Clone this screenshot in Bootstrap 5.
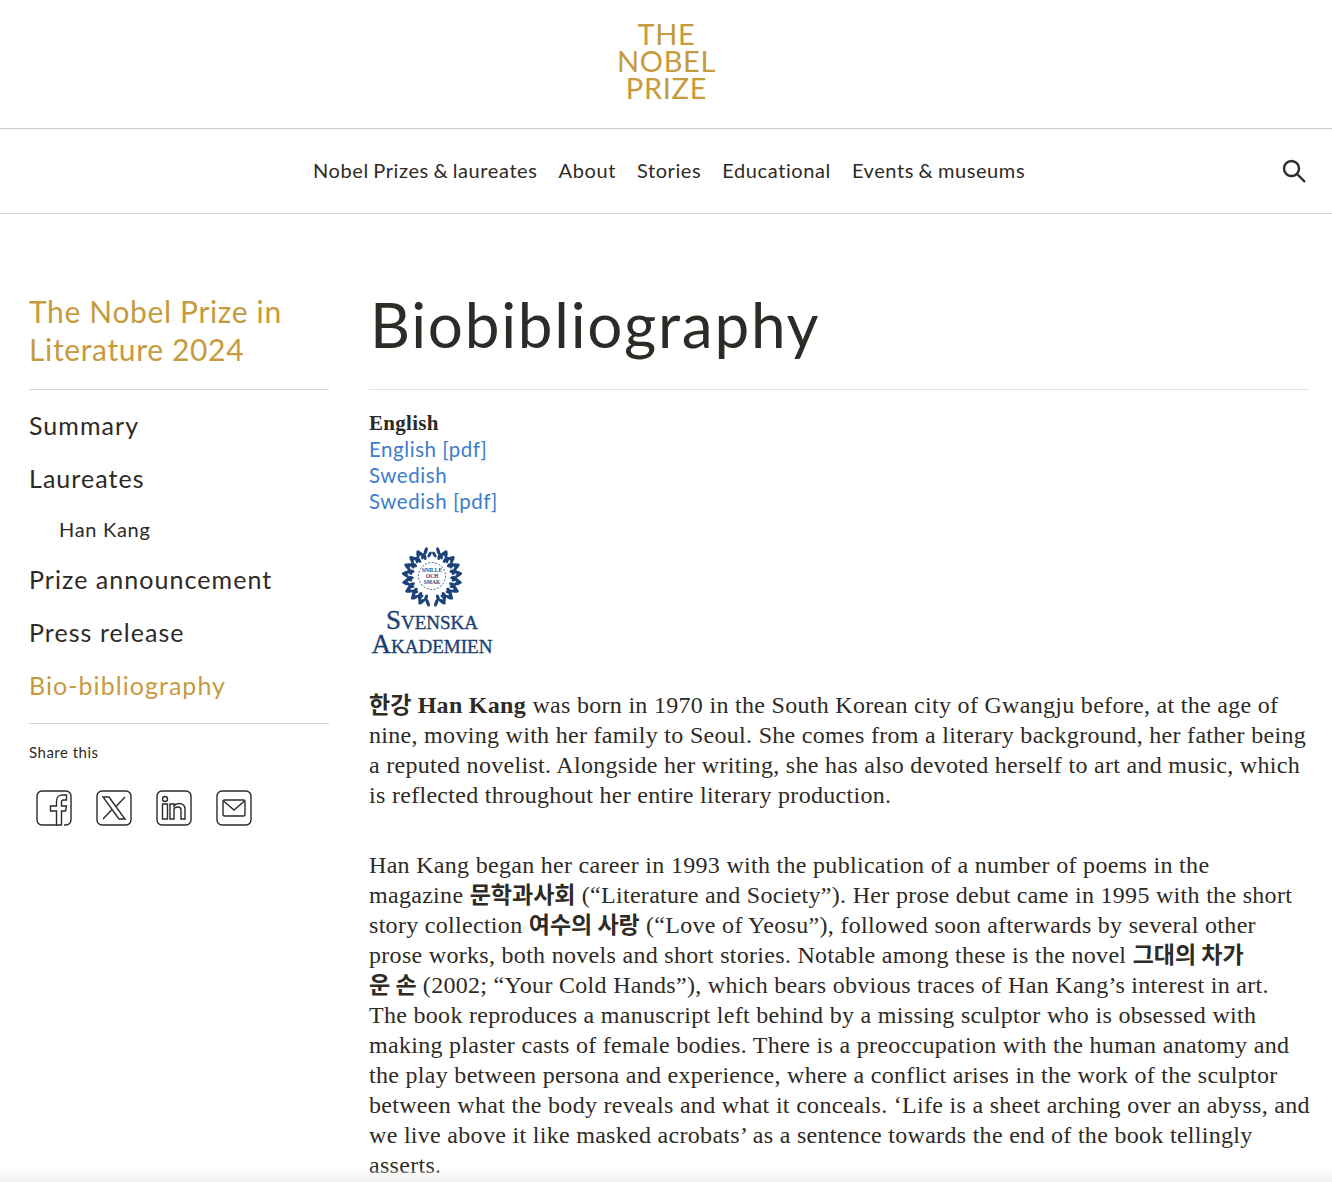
<!doctype html>
<html lang="en"><head><meta charset="utf-8"><title>Biobibliography</title>
<link href="https://cdn.jsdelivr.net/npm/bootstrap@5.3.0/dist/css/bootstrap.min.css" rel="stylesheet">
<style>
html,body{height:1182px;overflow:hidden}
body{font-family:Lato,"Noto Sans",sans-serif;color:#2e2a25;background:#fff}
a{text-decoration:none}
.top-logo{height:129px;border-bottom:1px solid #ccc}
.logo-text{color:#c79a3e;font-size:29px;line-height:27px;font-weight:400;text-align:center;letter-spacing:.7px;padding:20px 0 0 1px}
.main-nav{height:85px;border-bottom:1px solid #d4d4d4;position:relative;padding-left:313px;padding-right:25px}
.main-nav a{color:#2e2a25;font-size:20px;letter-spacing:.6px;word-spacing:-1.2px;line-height:24px;position:relative;top:-1px}
.nav-items{gap:21px}
.page-wrap{padding:0 23px 0 29px;gap:40px;margin-top:76px}
.side-col{width:300px;flex:none}
.main-col{width:940px;flex:none}
.side-title{color:#c79a3e;font-size:30px;line-height:38px;font-weight:400;margin:0;padding:2px 0 21px;letter-spacing:.65px;border-bottom:1px solid #d4d4d4}
.side-list{list-style:none;margin:0;padding:0;border-bottom:1px solid #d4d4d4;padding:12px 0 8px}
.side-list li{height:53px;line-height:46px;font-size:25px;letter-spacing:1.05px}
.side-list a{color:#2e2a25}
.side-list li.sub{height:48px;font-size:20px;padding-left:30px;line-height:42px;letter-spacing:.7px}
.side-list li.now a{color:#c79a3e}
.share-label{font-size:15px;margin:18px 0 0;line-height:20px;letter-spacing:.5px}
.share-row{gap:24px;margin:28px 0 0 7px}
.page-h{font-size:62px;line-height:76px;font-weight:400;margin:0;padding:0 0 23px 1px;border-bottom:1px solid #e2e2e2;letter-spacing:1.75px}
.page-h span{position:relative;top:-4px}
.lang-list{margin-top:20px;font-size:20.5px;line-height:26px;letter-spacing:.55px}
.lang-list b{font-family:"Liberation Serif",serif;font-size:21px;display:block;letter-spacing:.3px;line-height:26px}
.lang-list a{display:block;color:#3d7dcc}
.emblem{margin:33px 0 0;width:126px;text-align:center}
.emblem svg{display:block;margin:0 auto 1px}
.sa-word{font-family:"Liberation Serif",serif;color:#1c3f73;font-variant:small-caps;font-size:27px;line-height:24px;white-space:nowrap;-webkit-text-stroke:.35px #1c3f73}
.body-copy{font-family:"Liberation Serif",serif;font-size:24px;line-height:30px;margin:0;color:#2e2a25;letter-spacing:.3px;white-space:nowrap}
.body-copy .k{font-family:"Noto Sans CJK KR",sans-serif;font-weight:700;font-size:23px;line-height:1;letter-spacing:0}
.p-one{margin-top:34px;margin-bottom:40px}
.fade-foot{position:fixed;left:0;right:0;bottom:0;height:14px;background:linear-gradient(rgba(240,240,240,0),#f0f0f0)}
</style></head>
<body>
<header class="top-logo"><div class="logo-text">THE<br>NOBEL<br>PRIZE</div></header>
<nav class="main-nav d-flex align-items-center justify-content-between">
<div class="nav-items d-flex"><a href="#">Nobel Prizes &amp; laureates</a><a href="#">About</a><a href="#">Stories</a><a href="#">Educational</a><a href="#">Events &amp; museums</a></div>
<svg width="26" height="26" viewBox="0 0 26 26" fill="none" stroke="#2e2a25" stroke-width="2.4"><circle cx="10.500" cy="10.500" r="7.500"/><path d="M16 16l8 8"/></svg>
</nav>
<div class="page-wrap d-flex">
<aside class="side-col">
<h2 class="side-title">The Nobel Prize in Literature 2024</h2>
<ul class="side-list">
<li><a href="#">Summary</a></li><li><a href="#">Laureates</a></li><li class="sub"><a href="#">Han Kang</a></li><li><a href="#">Prize announcement</a></li><li><a href="#">Press release</a></li><li class="now"><a href="#">Bio-bibliography</a></li>
</ul>
<p class="share-label">Share this</p>
<div class="share-row d-flex">
<svg width="36" height="36" viewBox="0 0 36 36" fill="none" stroke="#2e2a25" stroke-width="1.4"><path d="M21 35H6a5 5 0 0 1-5-5V6a5 5 0 0 1 5-5h24a5 5 0 0 1 5 5v24a5 5 0 0 1-5 5h-2"/><path d="M21 35V21h-6v-5h6v-5c0-4 3-6 6-6h4v5h-3c-1.500 0-2 .8-2 2v4h5l-1 5h-4v14z" transform="translate(-.5)"/></svg>
<svg width="36" height="36" viewBox="0 0 36 36" fill="none" stroke="#2e2a25" stroke-width="1.4"><rect x="1" y="1" width="34" height="34" rx="5"/><path d="M7 7h6l16 22h-6zM29 7L20 16.500M16 19.500L7 29"/></svg>
<svg width="36" height="36" viewBox="0 0 36 36" fill="none" stroke="#2e2a25" stroke-width="1.4"><rect x="1" y="1" width="34" height="34" rx="5"/><circle cx="9" cy="9" r="2.500"/><path d="M6.500 14h5v15h-5zM14 14h4v2c1-1.500 3-2.500 5-2.500 4 0 6 2.500 6 6V29h-4V20c0-2-1-3-3-3s-4 1-4 3v9h-4z"/></svg>
<svg width="36" height="36" viewBox="0 0 36 36" fill="none" stroke="#2e2a25" stroke-width="1.4"><rect x="1" y="1" width="34" height="34" rx="5"/><rect x="7" y="10" width="22" height="16" rx="1.500"/><path d="M7.500 11L18 20l10.500-9"/></svg>
</div>
</aside>
<main class="main-col">
<h1 class="page-h"><span>Biobibliography</span></h1>
<div class="lang-list"><b>English</b><a href="#">English [pdf]</a><a href="#">Swedish</a><a href="#">Swedish [pdf]</a></div>
<div class="emblem">
<svg width="60" height="60" viewBox="0 0 60 60">
<defs>
<g id="lf" fill="#1c4379"><ellipse cx="27" cy="3.500" rx="1.700" ry="4" transform="rotate(-35 27 3.500)"/><ellipse cx="33" cy="4" rx="1.700" ry="4" transform="rotate(35 33 4)"/><ellipse cx="24.500" cy="8" rx="1.500" ry="3.200" transform="rotate(-50 24.500 8)"/><ellipse cx="30" cy="8.500" rx="1.700" ry="3.200"/></g>
<g id="br"><use href="#lf" transform="rotate(20 30 30)"/><use href="#lf" transform="rotate(38 30 30)"/><use href="#lf" transform="rotate(56 30 30)"/><use href="#lf" transform="rotate(74 30 30)"/><use href="#lf" transform="rotate(92 30 30)"/><use href="#lf" transform="rotate(110 30 30)"/><use href="#lf" transform="rotate(128 30 30)"/><use href="#lf" transform="rotate(146 30 30)"/><use href="#lf" transform="rotate(164 30 30)"/></g>
</defs>
<use href="#br"/><use href="#br" transform="translate(60) scale(-1 1)"/>
<circle cx="30" cy="29" r="14" fill="#fff"/><circle cx="30" cy="29" r="13.500" fill="none" stroke="#1c4379" stroke-width=".8" stroke-dasharray="2 1.500"/>
<g font-family="Liberation Serif" font-size="5.500" font-weight="700" fill="#1c4379" text-anchor="middle"><text x="30" y="24.500">SNILLE</text><text x="30" y="30.500">OCH</text><text x="30" y="36.500">SMAK</text></g></svg>
<div class="sa-word">Svenska</div><div class="sa-word">Akademien</div>
</div>
<p class="body-copy p-one"><span class="k">한강</span> <b>Han Kang</b> was born in 1970 in the South Korean city of Gwangju before, at the age of<br>nine, moving with her family to Seoul. She comes from a literary background, her father being<br>a reputed novelist. Alongside her writing, she has also devoted herself to art and music, which<br>is reflected throughout her entire literary production.</p>
<p class="body-copy">Han Kang began her career in 1993 with the publication of a number of poems in the<br>magazine <span class="k">문학과사회</span> (“Literature and Society”). Her prose debut came in 1995 with the short<br>story collection <span class="k">여수의 사랑</span> (“Love of Yeosu”), followed soon afterwards by several other<br>prose works, both novels and short stories. Notable among these is the novel <span class="k">그대의 차가<br>운 손</span> (2002; “Your Cold Hands”), which bears obvious traces of Han Kang’s interest in art.<br>The book reproduces a manuscript left behind by a missing sculptor who is obsessed with<br>making plaster casts of female bodies. There is a preoccupation with the human anatomy and<br>the play between persona and experience, where a conflict arises in the work of the sculptor<br>between what the body reveals and what it conceals. ‘Life is a sheet arching over an abyss, and<br>we live above it like masked acrobats’ as a sentence towards the end of the book tellingly<br>asserts.</p>
</main>
</div>
<div class="fade-foot"></div>
<script src="https://cdn.jsdelivr.net/npm/bootstrap@5.3.0/dist/js/bootstrap.bundle.min.js"></script>
</body></html>
